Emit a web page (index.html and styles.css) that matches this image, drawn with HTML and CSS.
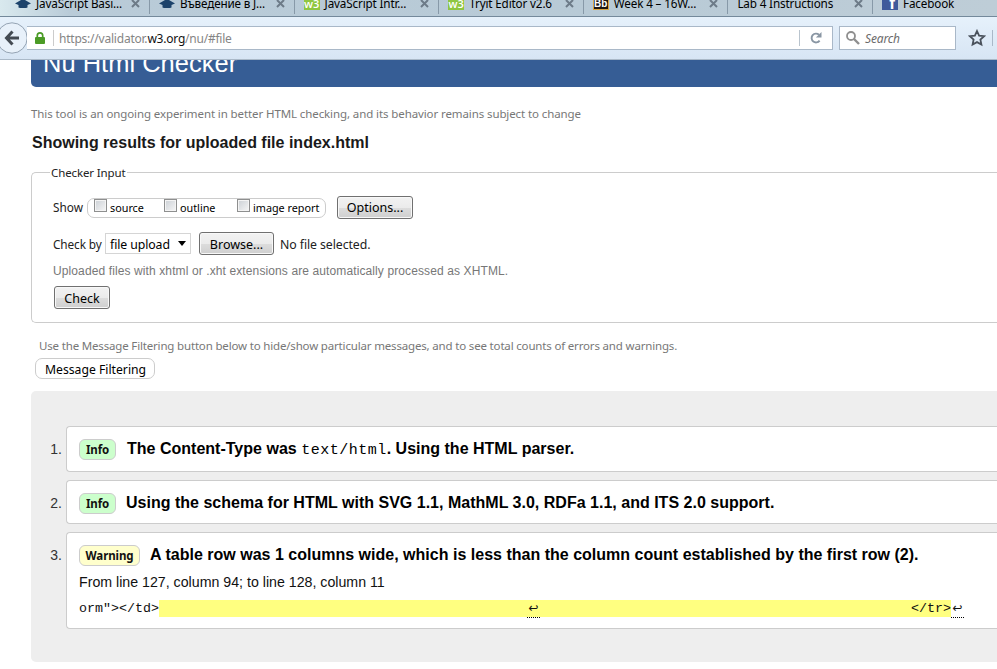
FILE: index.html
```html
<!DOCTYPE html>
<html lang="en">
<head>
<meta charset="utf-8">
<title>Nu Html Checker</title>
<link rel="stylesheet" href="styles.css">
</head>
<body>
<div class="tabs">
  <div class="tab first"><svg class="fav" viewBox="0 0 16 16"><path d="M0 9.500 6 6h4l6 3.500-3.500 1.500v2.500l-1.500.5H5l-1.500-.5V11z" fill="#1d436b"/></svg><span class="name">JavaScript Basi...</span><svg class="close" viewBox="0 0 9 9"><path d="M1 1l7 7M8 1 1 8"/></svg></div>
  <div class="tab"><svg class="fav" viewBox="0 0 16 16"><path d="M0 9.500 6 6h4l6 3.500-3.500 1.500v2.500l-1.500.5H5l-1.500-.5V11z" fill="#1d436b"/></svg><span class="name">Въведение в J...</span><svg class="close" viewBox="0 0 9 9"><path d="M1 1l7 7M8 1 1 8"/></svg></div>
  <div class="tab"><span class="fav w3">w3</span><span class="name">JavaScript Intr...</span><svg class="close" viewBox="0 0 9 9"><path d="M1 1l7 7M8 1 1 8"/></svg></div>
  <div class="tab"><span class="fav w3">w3</span><span class="name">Tryit Editor v2.6</span><svg class="close" viewBox="0 0 9 9"><path d="M1 1l7 7M8 1 1 8"/></svg></div>
  <div class="tab"><span class="fav bb">Bb</span><span class="name">Week 4 – 16W...</span><svg class="close" viewBox="0 0 9 9"><path d="M1 1l7 7M8 1 1 8"/></svg></div>
  <div class="tab"><span class="name">Lab 4 Instructions</span><svg class="close" viewBox="0 0 9 9"><path d="M1 1l7 7M8 1 1 8"/></svg></div>
  <div class="tab"><span class="fav fb">f</span><span class="name">Facebook</span></div>
</div>
<div class="toolbar">
  <svg class="back" viewBox="0 0 29 32"><circle cx="12" cy="16" r="15.2" fill="#e8f1fa" stroke="#94a3b3"/><path d="M12.5 9.5 6.5 16l6 6.5M7 16h12" fill="none" stroke="#444b53" stroke-width="3"/></svg>
  <div class="address">
    <svg class="lock" viewBox="0 0 10 12"><path d="M2.3 6V3.6a2.7 2.7 0 0 1 5.4 0V6" fill="none" stroke="#4b9b26" stroke-width="1.7"/><rect y="5" width="10" height="7" rx="1" fill="#4b9b26"/></svg>
    <span class="url">https://validator.<b>w3.org</b>/nu/#file</span>
    <span class="reload"><svg viewBox="0 0 12 12" width="12" height="12"><path d="M9.6 8.6A4.4 4.4 0 1 1 9 2.8" fill="none" stroke="#8996a3" stroke-width="1.9"/><path d="M11.5 0v5.6H5.9z" fill="#8996a3"/></svg></span>
  </div>
  <div class="search"><svg viewBox="0 0 14 14" width="14" height="14"><circle cx="5" cy="5" r="4" fill="none" stroke="#8f8f8f" stroke-width="1.8"/><path d="m8 8 5 5" stroke="#8f8f8f" stroke-width="2.4"/></svg><i>Search</i></div>
  <svg class="star" viewBox="0 0 18 18"><path d="m9 2 2.1 4.600 5 .6-3.700 3.400 1 5L9 13.100l-4.400 2.500 1-5L1.900 7.200l5-.6z" fill="none" stroke="#4a525c" stroke-width="1.8"/></svg>
  <span class="bar-end"></span>
</div>
<main>
  <header><h1>Nu Html Checker</h1></header>
  <p class="about">This tool is an ongoing experiment in better HTML checking, and its behavior remains subject to change</p>
  <h2>Showing results for uploaded file index.html</h2>
  <section class="box">
    <span class="legend">Checker Input</span>
    <div class="row show"><span class="label l1">Show</span>
      <div class="checks"><span class="ck"></span><span class="c1">source</span><span class="ck"></span><span class="c2">outline</span><span class="ck"></span><span class="c3">image report</span></div>
      <span class="btn options">Options...</span></div>
    <div class="row by"><span class="label l2">Check by</span>
      <div class="select"><span>file upload</span><svg width="8" height="5" viewBox="0 0 8 5"><path d="M0 0h8L4 5z"/></svg></div>
      <span class="btn browse">Browse...</span><span class="nofile">No file selected.</span></div>
    <p class="hint">Uploaded files with xhtml or .xht extensions are automatically processed as XHTML.</p>
    <span class="btn check">Check</span>
  </section>
  <p class="use">Use the Message Filtering button below to hide/show particular messages, and to see total counts of errors and warnings.</p>
  <span class="filter">Message Filtering</span>
  <div class="results">
    <div class="item one"><span class="num">1.</span><div class="card"><div class="line"><span class="tag info">Info</span><strong class="m1">The Content-Type was <code>text/html</code>. Using the HTML parser.</strong></div></div></div>
    <div class="item two"><span class="num">2.</span><div class="card"><div class="line"><span class="tag info">Info</span><strong>Using the schema for HTML with SVG 1.1, MathML 3.0, RDFa 1.1, and ITS 2.0 support.</strong></div></div></div>
    <div class="item three"><span class="num">3.</span><div class="card"><div class="line"><span class="tag warn">Warning</span><strong>A table row was 1 columns wide, which is less than the column count established by the first row (2).</strong></div>
      <p class="from">From line 127, column 94; to line 128, column 11</p>
      <div class="extract"><span class="code">orm"&gt;&lt;/td&gt;</span><span class="mark"><span class="cr">↩</span><span class="code">&lt;/tr&gt;</span></span><span class="cr">↩</span></div></div></div>
  </div>
</main>
</body>
</html>
```
FILE: styles.css
```css
* { box-sizing: border-box; }
body { margin: 0; width: 997px; height: 669px; overflow: hidden; background: #fff; color: #000; font: 12px/16px "Noto Sans", sans-serif; }
p, h1, h2 { margin: 0; font-weight: normal; }
span, p, h1, h2, strong { white-space: nowrap; }

.tabs { display: flex; height: 17px; overflow: hidden; background: linear-gradient(90deg, #d9e9ee 0, #b9cbd8 70px, #b8cad6 60%, #becdd7); border-bottom: 1px solid #74899b; }
.tab { display: flex; flex: none; width: 144.600px; height: 14px; padding-left: 9px; border-left: 1px solid #8799a8; }
.tab.first { width: 149px; padding-left: 15px; border: 0; }
.name { margin-top: -5px; font-size: 11.700px; letter-spacing: -0.15px; }
.fav { flex: none; width: 16px; height: 16px; margin: -6px 5px 0 0; }
.close { width: 9px; height: 9px; margin: -1px 9px 0 auto; fill: none; stroke: #6d7b88; stroke-width: 2; }
.w3 { background: #8fc641; color: #fff; font: 600 11px/19px "Open Sans", sans-serif; text-align: center; }
.bb { background: #1d1712; border: 1px solid #d9a441; color: #fff; font: bold 10px/17px "Liberation Sans", sans-serif; text-align: center; }
.fb { background: #3f5a9b; color: #fff; font: bold 17px/20px "Liberation Sans", sans-serif; text-align: right; padding-right: 3px; }

.toolbar { display: flex; align-items: center; height: 43px; background: linear-gradient(#e6f1fb, #d7e5f4); border-bottom: 1px solid #aab9c8; }
.back { width: 29px; height: 32px; flex: none; }
.address { display: flex; align-items: center; width: 806px; height: 24px; margin-left: -2px; background: #fff; border: 1px solid #a9b8c8; border-left: 0; padding-left: 8px; }
.lock { width: 10px; height: 12px; margin-right: 8px; }
.url { flex: 1; height: 16px; border-left: 1px solid #ccc; padding-left: 5px; line-height: 18px; color: #858585; letter-spacing: -0.22px; }
.url b { font-weight: normal; color: #111; }
.reload { display: flex; align-items: center; justify-content: center; width: 33px; height: 16px; border-left: 1px solid #b9c4ce; }
.search { display: flex; align-items: center; width: 117px; height: 24px; margin-left: 6px; padding-left: 6px; gap: 5px; background: #fff; border: 1px solid #a9b8c8; color: #6b6b6b; line-height: 18px; letter-spacing: -0.15px; }
.search i { padding-top: 1px; }
.star { width: 18px; height: 18px; margin-left: 12px; }
.bar-end { height: 16px; margin-left: 6px; border-left: 1px solid #a9b8c8; }

main { padding-left: 31px; }
header { height: 27px; overflow: hidden; background: #365d95; border-radius: 0 0 0 5px; padding-left: 12px; }
h1 { margin-top: -12px; font: 25.500px/30px "Liberation Sans", sans-serif; color: #fff; }
.about { margin-top: 19px; color: #777; font-size: 11.500px; letter-spacing: -0.1px; }
h2 { margin: 11px 0 0 1px; font: bold 16px/20px "Liberation Sans", sans-serif; color: #1a1a1a; }
.box { height: 151px; margin-top: 19px; padding-left: 21px; border: 1px solid #ccc; border-right: 0; border-radius: 5px 0 0 5px; }
.legend { display: block; width: 77px; height: 16px; margin: -8px 0 0 -3px; padding-left: 1px; background: #fff; color: #222; font-size: 11.500px; letter-spacing: -0.12px; }
.row { display: flex; align-items: center; }
.label { color: #222; font-size: 11.800px; }
.show { height: 24px; margin-top: 14px; }
.l1 { width: 34px; }
.checks { display: flex; align-items: center; width: 239px; height: 20px; margin-top: 1px; padding: 1px 0 0 6px; border: 1px solid #ccc; border-radius: 7px; font-size: 10.800px; }
.ck { width: 13px; height: 13px; margin: -5px 3px 0 0; border: 1px solid #8e8f8f; background: linear-gradient(135deg, #cbd0d5, #f6f6f6); box-shadow: inset 0 0 0 1px #f4f4f4; }
.c1 { width: 54px; }
.c2 { width: 57px; }
.btn { display: flex; align-items: center; justify-content: center; height: 23px; padding-top: 2px; border: 1px solid #707070; border-radius: 3px; background: linear-gradient(#f2f2f2 0, #ebebeb 50%, #dddddd 50%, #cfcfcf); box-shadow: inset 0 0 0 1px #f8f8f8; font-size: 12.500px; }
.options { width: 76px; margin-left: 11px; }
.by { height: 23px; margin-top: 13px; }
.l2 { width: 52px; letter-spacing: -0.1px; }
.select { display: flex; align-items: center; justify-content: space-between; width: 86px; height: 21px; padding: 0 4px; border: 1px solid #d5d5d5; font-size: 12.300px; letter-spacing: -0.1px; }
.select span { padding-top: 2px; }
.browse { width: 75px; margin-left: 8px; }
.nofile { margin-left: 6px; padding-top: 2px; font-size: 12.300px; letter-spacing: -0.08px; color: #222; }
.hint { margin-top: 8px; font: 12px/16px "Liberation Sans", sans-serif; letter-spacing: 0.11px; color: #777; }
.check { width: 56px; margin: 7px 0 0 1px; }
.use { margin: 15px 0 0 8px; color: #777; font-size: 11.500px; letter-spacing: -0.17px; }
.filter { display: block; width: 120px; height: 21px; margin: 4px 0 0 4px; padding-left: 9px; border: 1px solid #ccc; border-radius: 7px; font-size: 12.200px; line-height: 21px; }
.results { height: 271px; margin-top: 12px; padding-top: 35px; background: #eee; border-radius: 5px 0 0 5px; color: #111; }
.item { display: flex; }
.num { width: 35px; padding: 13px 4px 0 0; text-align: right; font: 14px/20px "Liberation Sans", sans-serif; color: #333; }
.card { flex: 1; padding: 12px 0 0 12px; background: #fff; border: 1px solid #ccc; border-right: 0; border-radius: 4px 0 0 4px; }
.one .card { height: 46px; }
.two .card { height: 44px; }
.three .card { height: 97px; }
.two, .three { margin-top: 8px; }
.line { display: flex; height: 21px; }
.tag { width: 37px; height: 21px; border: 1px solid #ccc; border-radius: 6px; font: bold 11.500px/20px "Noto Sans", sans-serif; letter-spacing: -0.1px; text-align: center; }
.info { background: #cfc; }
.warn { width: 61px; background: #ffc; }
strong { height: 20px; margin-left: 10px; font: bold 16px/20px "Liberation Sans", sans-serif; letter-spacing: 0.01px; color: #000; }
.m1 { margin-left: 11px; }
code { font: 15px/16px "Liberation Mono", monospace; letter-spacing: 0.5px; }
.from { margin-top: 6px; font: 14.200px/20px "Liberation Sans", sans-serif; }
.extract { display: flex; height: 17px; margin-top: 8px; font: 13.330px/16px "Liberation Mono", monospace; }
.code { line-height: 18px; }
.mark { display: flex; justify-content: space-between; width: 792px; background: #ffff80; padding-left: 368px; }
.cr { width: 13px; height: 18px; border-bottom: 1px dotted #000; font: 12px/16px "DejaVu Sans", sans-serif; text-align: center; }
```
